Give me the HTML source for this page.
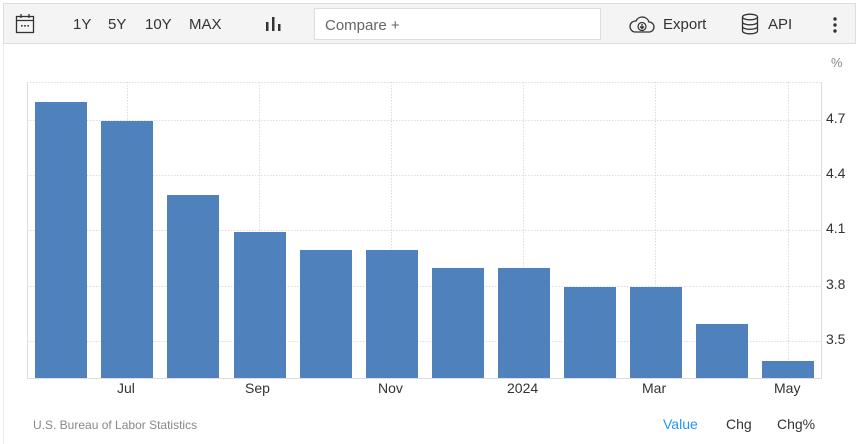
<!DOCTYPE html>
<html><head><style>
body{margin:0;width:859px;height:444px;background:#fff;font-family:"Liberation Sans",sans-serif;position:relative;overflow:hidden}
.tb{position:absolute;left:3px;top:3px;width:853px;height:41px;background:#f4f4f4;border:1px solid #ddd;box-sizing:border-box}
.t{position:absolute;font-size:15px;color:#333;top:16px}
.cmp{position:absolute;left:314px;top:8px;width:287px;height:32px;background:#fff;border:1px solid #ddd;box-sizing:border-box;font-size:15px;color:#666;padding:7px 10px}
.lbl{position:absolute;font-size:14px;color:#333}
</style></head><body>
<div style="position:absolute;left:3px;top:43px;width:1px;height:401px;background:#eee"></div>
<div class="tb"></div>
<svg style="position:absolute;left:15px;top:13px" width="20" height="22" viewBox="0 0 20 22"><rect x="1.5" y="3.5" width="17" height="16" fill="none" stroke="#333" stroke-width="1.3"/><line x1="1.5" y1="7.5" x2="18.5" y2="7.5" stroke="#333" stroke-width="1.3"/><line x1="6" y1="1" x2="6" y2="5" stroke="#333" stroke-width="1.3"/><line x1="14" y1="1" x2="14" y2="5" stroke="#333" stroke-width="1.3"/><rect x="6" y="12" width="1.6" height="1.6" fill="#333"/><rect x="9.2" y="12" width="1.6" height="1.6" fill="#333"/><rect x="12.4" y="12" width="1.6" height="1.6" fill="#333"/></svg>
<div class="t" style="left:73px">1Y</div>
<div class="t" style="left:108px">5Y</div>
<div class="t" style="left:145px">10Y</div>
<div class="t" style="left:189px">MAX</div>
<svg style="position:absolute;left:265px;top:16px" width="16" height="16"><rect x="1" y="6" width="2.5" height="9" fill="#333"/><rect x="7" y="1" width="2.5" height="14" fill="#333"/><rect x="13" y="8" width="2.5" height="7" fill="#333"/></svg>
<div class="cmp" style="padding-top:8px">Compare +</div>
<svg style="position:absolute;left:629px;top:15px" width="26" height="20" viewBox="0 0 26 20"><path d="M6 17 H20 A5 5 0 0 0 20 7 A7 7 0 0 0 7 6 A5.5 5.5 0 0 0 6 17Z" fill="none" stroke="#333" stroke-width="1.3"/><circle cx="13" cy="11.5" r="4" fill="none" stroke="#333" stroke-width="1.2"/><path d="M13 9v4M11 11.5l2 2 2-2" stroke="#333" stroke-width="1.3" fill="none"/></svg>
<div class="t" style="left:663px">Export</div>
<svg style="position:absolute;left:741px;top:13px" width="18" height="22" viewBox="0 0 18 22"><ellipse cx="9" cy="4" rx="7.5" ry="2.8" fill="none" stroke="#333" stroke-width="1.3"/><path d="M1.5 4v14c0 1.6 3.4 2.8 7.5 2.8s7.5-1.2 7.5-2.8V4M1.5 9c0 1.6 3.4 2.8 7.5 2.8s7.5-1.2 7.5-2.8M1.5 13.5c0 1.6 3.4 2.8 7.5 2.8s7.5-1.2 7.5-2.8" fill="none" stroke="#333" stroke-width="1.3"/></svg>
<div class="t" style="left:768px">API</div>
<svg style="position:absolute;left:832px;top:16px" width="6" height="18"><circle cx="3" cy="3" r="1.7" fill="#333"/><circle cx="3" cy="9" r="1.7" fill="#333"/><circle cx="3" cy="15" r="1.7" fill="#333"/></svg>
<div class="lbl" style="left:831px;top:55px;font-size:13px;color:#888">%</div>
<svg style="position:absolute;left:0;top:0" width="859" height="444">
<g stroke="#ddd" stroke-dasharray="1.5,1.5" stroke-width="1">
<line x1="27" y1="82.5" x2="821" y2="82.5"/>
<line x1="27" y1="120.5" x2="821" y2="120.5"/>
<line x1="27" y1="175.5" x2="821" y2="175.5"/>
<line x1="27" y1="230.5" x2="821" y2="230.5"/>
<line x1="27" y1="286.5" x2="821" y2="286.5"/>
<line x1="27" y1="341.5" x2="821" y2="341.5"/>
<line x1="127.5" y1="82" x2="127.5" y2="378"/>
<line x1="259.5" y1="82" x2="259.5" y2="378"/>
<line x1="391.5" y1="82" x2="391.5" y2="378"/>
<line x1="523.5" y1="82" x2="523.5" y2="378"/>
<line x1="655.5" y1="82" x2="655.5" y2="378"/>
<line x1="788.5" y1="82" x2="788.5" y2="378"/>
</g>
<g fill="#4f81bd">
<rect x="35" y="102" width="52" height="276"/>
<rect x="101" y="121" width="52" height="257"/>
<rect x="167" y="195" width="52" height="183"/>
<rect x="234" y="232" width="52" height="146"/>
<rect x="300" y="250" width="52" height="128"/>
<rect x="366" y="250" width="52" height="128"/>
<rect x="432" y="268" width="52" height="110"/>
<rect x="498" y="268" width="52" height="110"/>
<rect x="564" y="287" width="52" height="91"/>
<rect x="630" y="287" width="52" height="91"/>
<rect x="696" y="324" width="52" height="54"/>
<rect x="762" y="361" width="52" height="17"/>
</g>
<line x1="27.5" y1="82" x2="27.5" y2="378" stroke="#ddd"/>
<line x1="27" y1="378.5" x2="822" y2="378.5" stroke="#ddd"/>
<line x1="821.5" y1="82" x2="821.5" y2="378" stroke="#ddd"/>
</svg>
<div class="lbl" style="left:826px;top:110px">4.7</div>
<div class="lbl" style="left:826px;top:165px">4.4</div>
<div class="lbl" style="left:826px;top:220px">4.1</div>
<div class="lbl" style="left:826px;top:276px">3.8</div>
<div class="lbl" style="left:826px;top:331px">3.5</div>
<div class="lbl" style="left:117px;top:380px">Jul</div>
<div class="lbl" style="left:245px;top:380px">Sep</div>
<div class="lbl" style="left:378px;top:380px">Nov</div>
<div class="lbl" style="left:507px;top:380px">2024</div>
<div class="lbl" style="left:642px;top:380px">Mar</div>
<div class="lbl" style="left:774px;top:380px">May</div>
<div class="lbl" style="left:33px;top:418px;font-size:12px;color:#888">U.S. Bureau of Labor Statistics</div>
<div class="lbl" style="left:663px;top:416px;color:#2196f3">Value</div>
<div class="lbl" style="left:726px;top:416px">Chg</div>
<div class="lbl" style="left:777px;top:416px">Chg%</div>
</body></html>
